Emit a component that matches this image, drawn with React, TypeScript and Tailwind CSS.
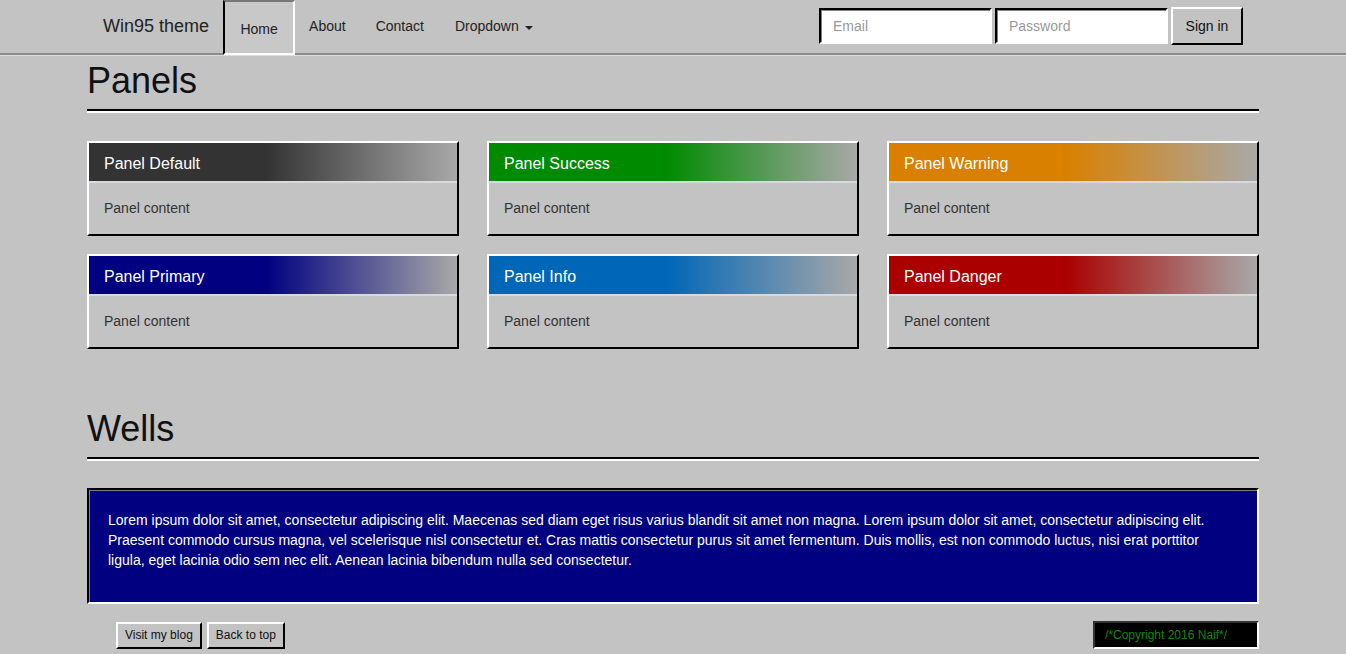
import React from 'react';

const panels = [
  { title: 'Panel Default', head: 'bg-[linear-gradient(to_right,#333333_48%,#a8a8a8_100%)]' },
  { title: 'Panel Success', head: 'bg-[linear-gradient(to_right,#008a00_48%,#a8a8a8_100%)]' },
  { title: 'Panel Warning', head: 'bg-[linear-gradient(to_right,#d98000_48%,#a8a8a8_100%)]' },
  { title: 'Panel Primary', head: 'bg-[linear-gradient(to_right,#000080_48%,#a8a8a8_100%)]' },
  { title: 'Panel Info', head: 'bg-[linear-gradient(to_right,#0066b8_48%,#a8a8a8_100%)]' },
  { title: 'Panel Danger', head: 'bg-[linear-gradient(to_right,#aa0000_48%,#a8a8a8_100%)]' },
];

function Panel({ title, head }: { title: string; head: string }) {
  return (
    <div className="border-2 border-t-white border-l-white border-r-black border-b-black bg-[#c3c3c3] h-[95px]">
      <div className={`${head} h-[40px] flex items-center pl-[15px] pt-[3px] text-white text-[16px] border-b-2 border-[#d8d8e0]`}>
        {title}
      </div>
      <div className="px-[15px] pt-[15px] text-[14px] text-[#333]">Panel content</div>
    </div>
  );
}

function PageHeader({ children }: { children: React.ReactNode }) {
  return (
    <div className="border-b-[2px] border-black shadow-[0_2px_0_#ffffff]">
      <h1 className="text-[36px] leading-[40px] text-[#111] pb-[8px]">{children}</h1>
    </div>
  );
}

export default function App() {
  return (
    <div className="min-h-screen bg-[#c3c3c3] font-['Liberation_Sans',Arial,sans-serif] text-[#111]">
      <nav className="h-[55px] border-b-2 border-[#8a8a8a] shadow-[0_1px_0_#dcdcdc]">
        <div className="w-[1170px] mx-auto flex items-stretch h-[53px]">
          <div className="pl-[15px] pr-[14px] flex items-center text-[18px] text-[#222]">Win95 theme</div>
          <div className="flex items-stretch text-[14px] text-[#222]">
            <a className="w-[72px] flex items-center justify-center pt-[3px] bg-[#c8c8c8] border-l-2 border-t-2 border-l-black border-t-[#777] border-r-2 border-b-2 border-r-white border-b-white h-[55px]">
              Home
            </a>
            <a className="px-[14px] flex items-center">About</a>
            <a className="pl-[16px] pr-[15px] flex items-center">Contact</a>
            <a className="pl-[16px] pr-[15px] flex items-center gap-[6px]">
              Dropdown
              <span className="inline-block w-0 h-0 border-l-[4px] border-r-[4px] border-t-[4px] border-l-transparent border-r-transparent border-t-[#222] mt-[2px]" />
            </a>
          </div>
          <div className="ml-auto flex items-center gap-[3px] pr-[15px] pb-[1px]">
            <input
              placeholder="Email"
              className="w-[173px] h-[36px] bg-white border-2 border-t-black border-l-black border-r-white border-b-white shadow-[inset_1px_1px_0_#808080] px-[12px] text-[14px] placeholder-[#999] outline-none"
            />
            <input
              placeholder="Password"
              className="w-[173px] h-[36px] bg-white border-2 border-t-black border-l-black border-r-white border-b-white shadow-[inset_1px_1px_0_#808080] px-[12px] text-[14px] placeholder-[#999] outline-none"
            />
            <button className="w-[72px] h-[38px] bg-[#c3c3c3] border-2 border-t-white border-l-white border-r-black border-b-black text-[14px] text-[#111]">
              Sign in
            </button>
          </div>
        </div>
      </nav>

      <main className="w-[1172px] mx-auto">
        <div className="pt-[6px]">
          <PageHeader>Panels</PageHeader>
        </div>

        <div className="grid grid-cols-3 gap-x-[28px] gap-y-[18px] mt-[30px]">
          {panels.map((p) => (
            <Panel key={p.title} title={p.title} head={p.head} />
          ))}
        </div>

        <div className="mt-[60px]">
          <PageHeader>Wells</PageHeader>
        </div>

        <div className="mt-[29px] h-[116px] bg-[#000080] border-2 border-t-black border-l-black border-r-white border-b-white shadow-[inset_1px_1px_0_#808080] px-[19px] pt-[20px] text-white text-[14px] leading-[20px]">
          Lorem ipsum dolor sit amet, consectetur adipiscing elit. Maecenas sed diam eget risus varius blandit sit amet non magna. Lorem ipsum dolor sit amet, consectetur adipiscing elit. Praesent commodo cursus magna, vel scelerisque nisl consectetur et. Cras mattis consectetur purus sit amet fermentum. Duis mollis, est non commodo luctus, nisi erat porttitor ligula, eget lacinia odio sem nec elit. Aenean lacinia bibendum nulla sed consectetur.
        </div>

        <footer className="flex items-center justify-between mt-[17px] pl-[29px]">
          <div className="flex gap-[5px]">
            <button className="h-[27px] px-[7px] bg-[#c3c3c3] border-2 border-t-white border-l-white border-r-black border-b-black text-[12px] text-[#111]">
              Visit my blog
            </button>
            <button className="h-[27px] px-[7px] bg-[#c3c3c3] border-2 border-t-white border-l-white border-r-black border-b-black text-[12px] text-[#111]">
              Back to top
            </button>
          </div>
          <div className="h-[28px] w-[166px] bg-black border-2 border-t-[#333] border-l-[#333] border-r-white border-b-white flex items-center pl-[10px] text-[12px] text-[#0a8a0a]">
            /*Copyright 2016 Naif*/
          </div>
        </footer>
      </main>
    </div>
  );
}
